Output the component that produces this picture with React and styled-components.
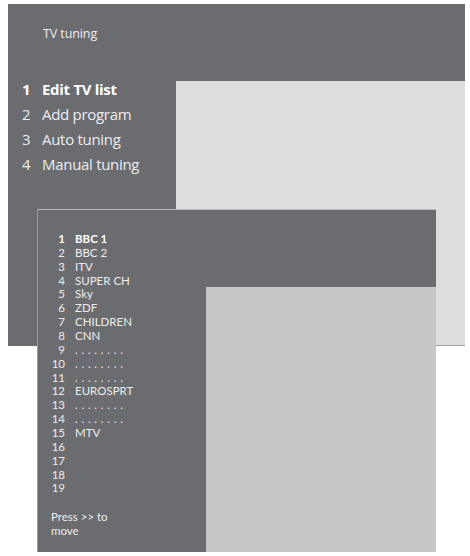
import React from "react";
import styled, { createGlobalStyle } from "styled-components";

const Global = createGlobalStyle`
  html, body { margin: 0; padding: 0; background: #ffffff; }
  body { font-family: "Open Sans", "Noto Sans", sans-serif; }
`;

const Page = styled.div`
  position: relative;
  width: 470px;
  height: 556px;
  padding: 4px 0 0 8px;
  box-sizing: border-box;
  overflow: hidden;
`;

const Panel = styled.div`
  display: grid;
  grid-template-columns: ${(p) => p.$side}px 1fr;
  grid-template-rows: 77px 1fr;
  background: #6b6c70;
  color: #eeeeef;
  box-sizing: border-box;
`;

const MainPanel = styled(Panel)`
  width: 457px;
  height: 342px;
`;

const ListPanel = styled(Panel)`
  position: absolute;
  left: 37px;
  top: 209px;
  width: 399px;
  height: 343px;
  border-top: 1px solid #b9babd;
  border-left: 1px solid #9c9da0;
`;

const Header = styled.div`
  grid-column: 1 / 3;
  padding: 21px 0 0 35px;
  font-size: 12.5px;
  line-height: 17px;
  letter-spacing: -0.1px;
`;

const Fill = styled.div`
  grid-column: 2;
  grid-row: 2;
  background: ${(p) => p.$tone};
  border-bottom: ${(p) => (p.$edge ? "1px solid #9a9b9e" : "none")};
`;

const Menu = styled.div`
  grid-column: 1;
  grid-row: 2;
  margin-top: -4px;
  padding-left: 14px;
`;

const MenuRow = styled.div`
  display: flex;
  font-size: 15px;
  line-height: 25px;
  letter-spacing: -0.3px;
  font-weight: ${(p) => (p.$active ? 700 : 400)};
  color: ${(p) => (p.$active ? "#ffffff" : "#ededee")};
`;

const MenuNum = styled.span`
  width: 20px;
  flex: none;
`;

const List = styled.div`
  grid-column: 1;
  grid-row: 1 / 3;
  padding: 22px 0 0 13px;
  display: flex;
  flex-direction: column;
  font-family: Lato, "Open Sans", sans-serif;
`;

const ListRow = styled.div`
  display: flex;
  gap: 10px;
  font-size: 11.5px;
  line-height: 13.86px;
  height: 13.86px;
  font-weight: ${(p) => (p.$active ? 700 : 400)};
  color: ${(p) => (p.$active ? "#ffffff" : "#ededee")};
`;

const ListNum = styled.span`
  width: 14px;
  flex: none;
  text-align: right;
`;

const Dots = styled.span`
  letter-spacing: 0.4px;
`;

const Hint = styled.div`
  margin-top: 15px;
  font-size: 11.5px;
  line-height: 14px;
  width: 80px;
  color: #ededee;
`;

const menu = ["Edit TV list", "Add program", "Auto tuning", "Manual tuning"];

const channels = [
  "BBC 1",
  "BBC 2",
  "ITV",
  "SUPER CH",
  "Sky",
  "ZDF",
  "CHILDREN",
  "CNN",
  null,
  null,
  null,
  "EUROSPRT",
  null,
  null,
  "MTV",
  "",
  "",
  "",
  "",
];

export default function App() {
  return (
    <>
      <Global />
      <Page>
        <MainPanel $side={168}>
          <Header>TV tuning</Header>
          <Menu>
            {menu.map((m, i) => (
              <MenuRow key={m} $active={i === 0}>
                <MenuNum>{i + 1}</MenuNum>
                <span>{m}</span>
              </MenuRow>
            ))}
          </Menu>
          <Fill $tone="#dcdddf" $edge />
        </MainPanel>
        <ListPanel $side={168}>
          <List>
            {channels.map((c, i) => (
              <ListRow key={i} $active={i === 0}>
                <ListNum>{i + 1}</ListNum>
                {c === null ? <Dots>. . . . . . . .</Dots> : <span>{c}</span>}
              </ListRow>
            ))}
            <Hint>Press &gt;&gt; to move</Hint>
          </List>
          <Fill $tone="#c6c7c9" />
        </ListPanel>
      </Page>
    </>
  );
}
